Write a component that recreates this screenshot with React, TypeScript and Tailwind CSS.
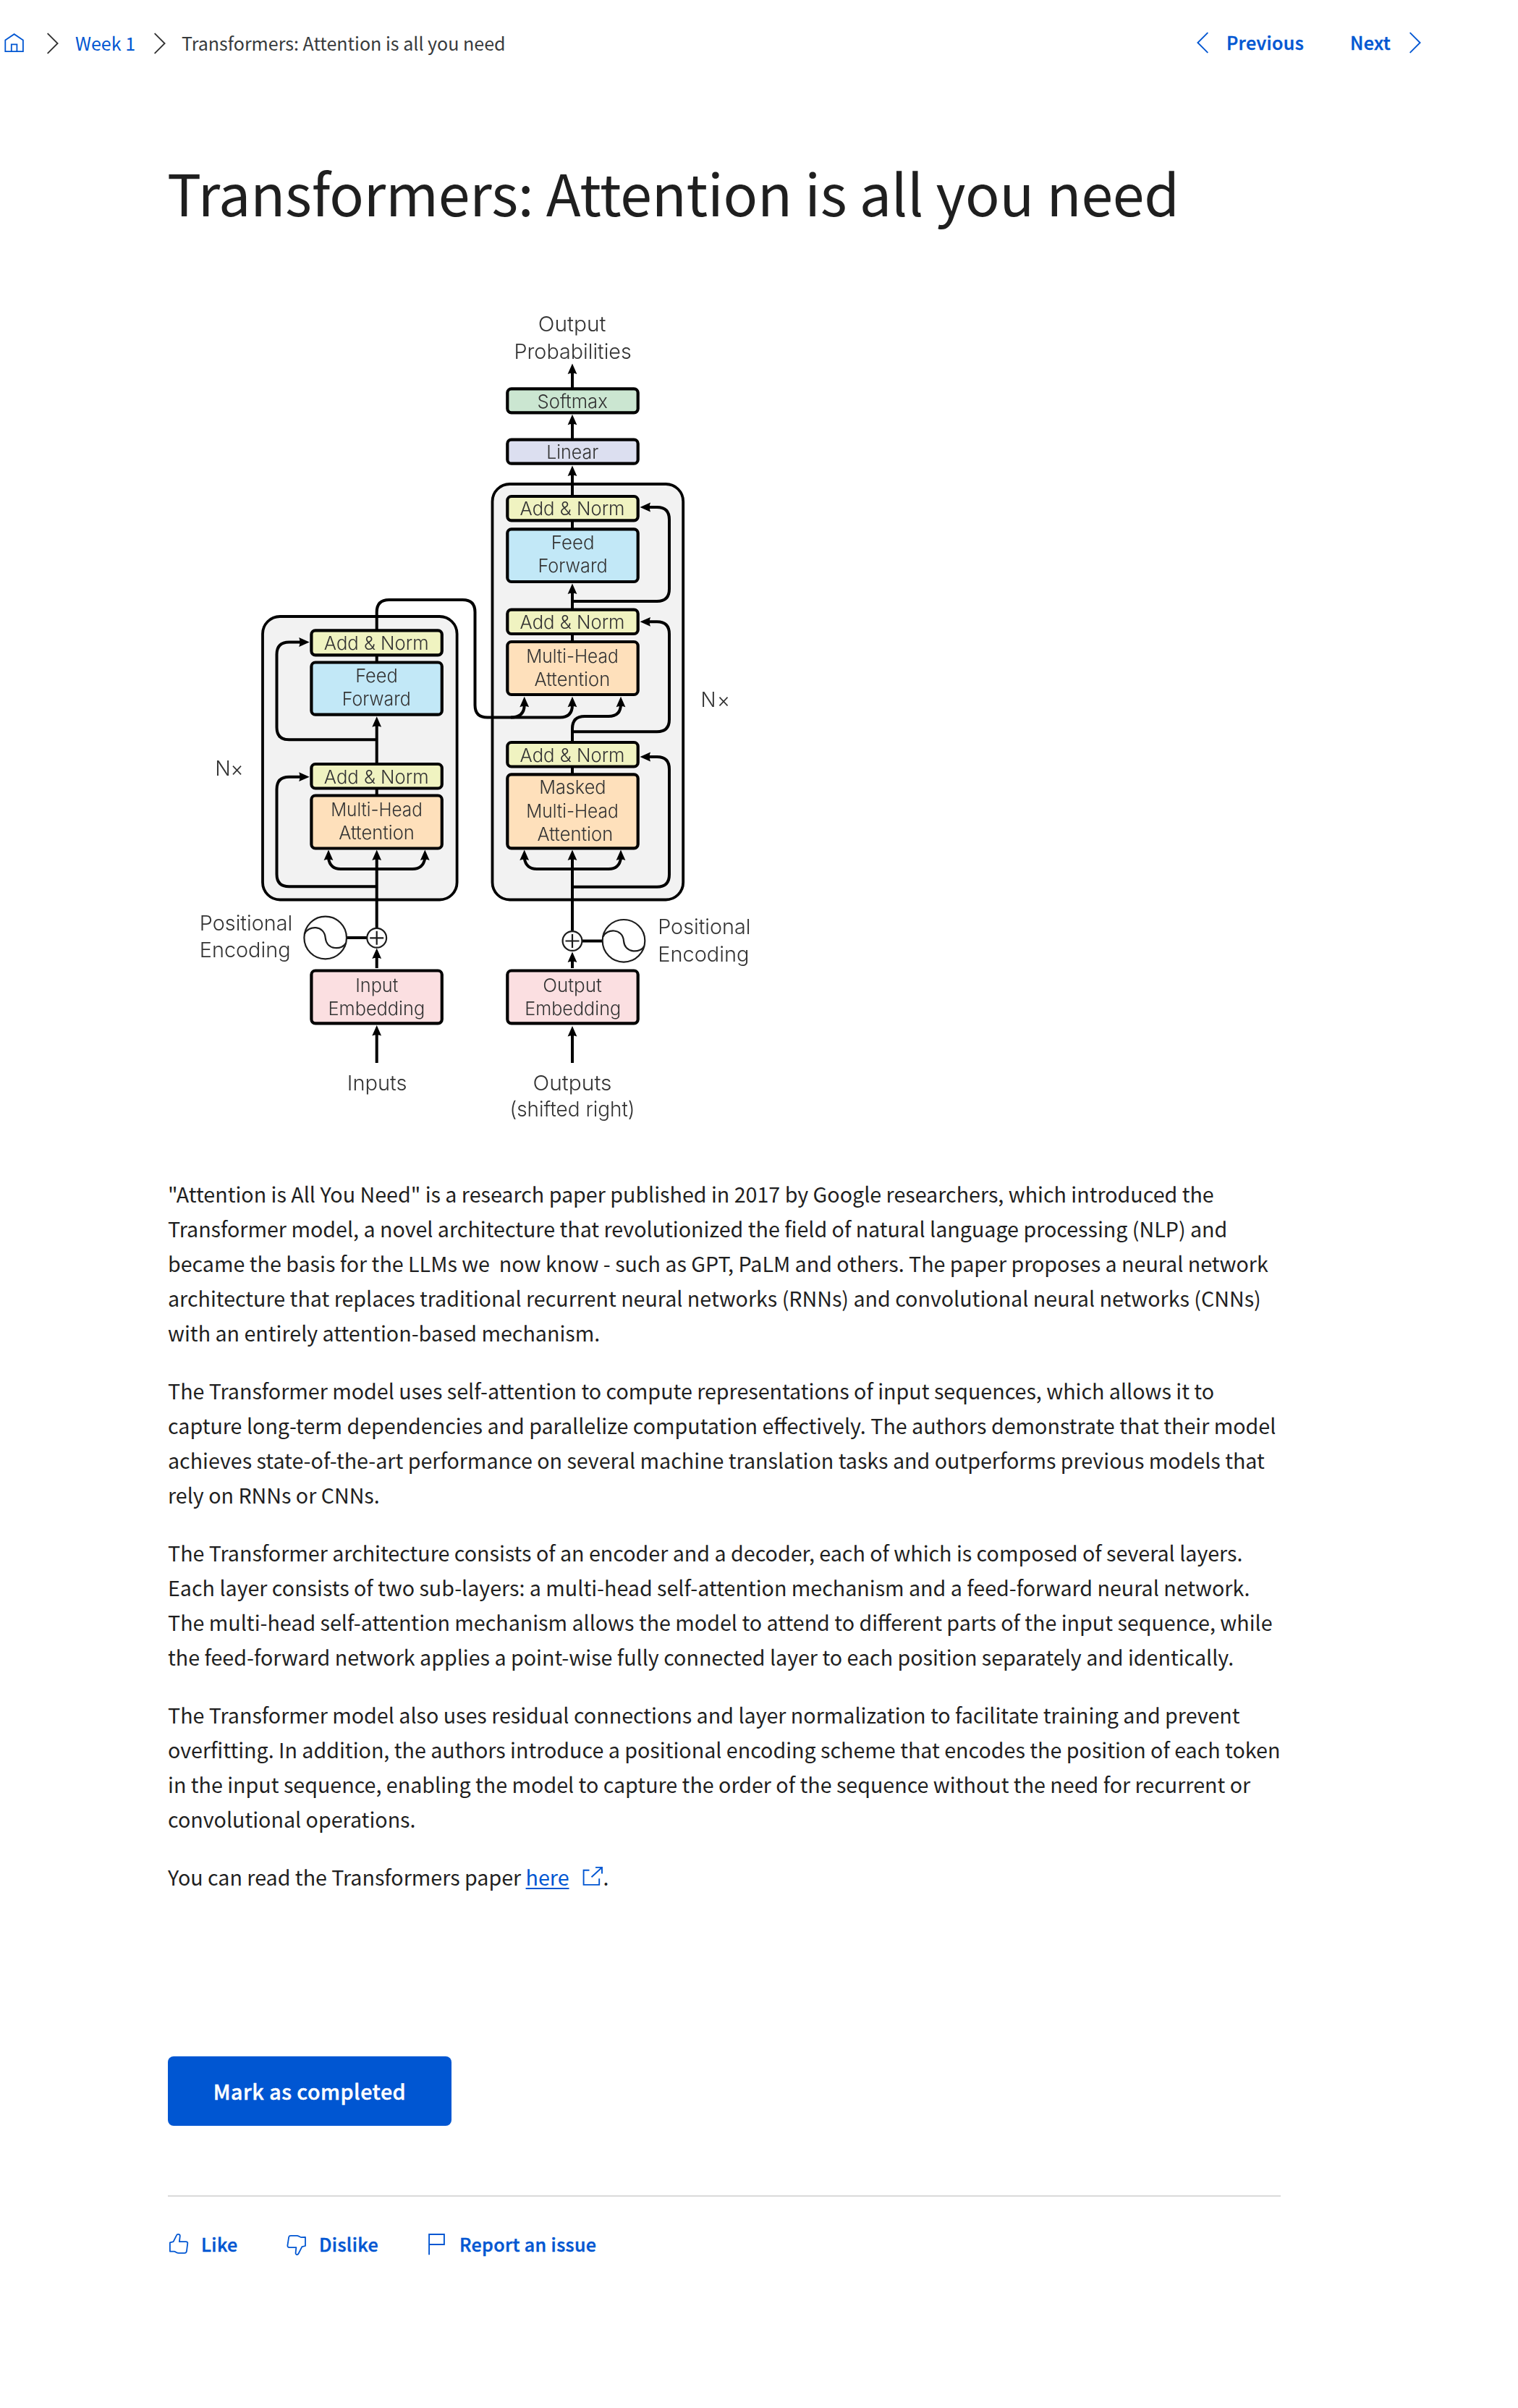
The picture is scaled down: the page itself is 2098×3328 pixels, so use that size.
import React from 'react';

const BLUE = '#0056D2';

/* ---------- icons ---------- */

function HomeIcon() {
  return (
    <svg width="32" height="32" viewBox="0 0 32 32" fill="none" stroke={BLUE} strokeWidth="1.8">
      <path d="M3.3 27.2V11.4L15.6 3.2L27.9 11.4V27.2Z" />
      <path d="M11.8 27.2V17.3H19.4V27.2" />
    </svg>
  );
}

function Chevron({ color, left = false }: { color: string; left?: boolean }) {
  return (
    <svg width="18" height="30" viewBox="0 0 18 30" fill="none" stroke={color} strokeWidth="1.9" strokeLinecap="round">
      <path d={left ? 'M15.8 1.6L2.4 15L15.8 28.4' : 'M2.2 1.6L15.6 15L2.2 28.4'} />
    </svg>
  );
}

function ExternalIcon() {
  return (
    <svg className="inline-block align-baseline ml-[17px]" width="30" height="28" viewBox="0 0 30 28" fill="none" stroke={BLUE} strokeWidth="1.9">
      <path d="M10.5 6.7H2.6V26.9H24.2V18.2" />
      <path d="M13.5 16.3L27.6 3.2M19 2.9H28V11.5" />
    </svg>
  );
}

function LikeIcon() {
  return (
    <svg width="30" height="34" viewBox="0 0 30 34" fill="none" stroke={BLUE} strokeWidth="1.8" strokeLinejoin="round">
      <path d="M2.9 26.5V14.4L7.6 13.2L12 4.3C13 2 17 2.5 16.8 5.5L15.9 13.2H25Q27.6 13.2 27.3 15.5L26 26Q25.7 28.9 23 28.9H15C12 28.9 11 27 8.6 26.7Z" />
    </svg>
  );
}

function DislikeIcon() {
  return (
    <svg width="30" height="34" viewBox="0 0 30 34" fill="none" stroke={BLUE} strokeWidth="1.8" strokeLinejoin="round">
      <path d="M5.2 6.6Q5.6 4.9 8 4.9H16C19 4.9 20 6.9 22.4 7.1L28 7V19L23.4 20.2L18.6 29.5C17.4 32 14.4 31.4 14.6 28.4L15.4 21.1H6Q3.2 21 3.4 18.4Z" />
    </svg>
  );
}

function FlagIcon() {
  return (
    <svg width="26" height="34" viewBox="0 0 26 34" fill="none" stroke={BLUE} strokeWidth="1.9">
      <path d="M3.1 31.2V3H23.9V17H3.1" />
    </svg>
  );
}

/* ---------- architecture diagram ---------- */

// Label whose glyphs span x0..x1 on baseline y.
function Label({ x0, x1, y, size = 26, children }: { x0: number; x1: number; y: number; size?: number; children: string }) {
  return (
    <text x={x0 - 1.5} y={y} fontSize={size} textLength={x1 - x0 + 3} lengthAdjust="spacingAndGlyphs" fill="#333">
      {children}
    </text>
  );
}

function Box({ x, top, bottom, fill }: { x: number; top: number; bottom: number; fill: string }) {
  return <rect x={x + 2} y={top + 2} width={180.4} height={bottom - top - 4} rx={5.5} fill={fill} stroke="#000" strokeWidth={4.2} />;
}

function Head({ x, y, dir = 'up' }: { x: number; y: number; dir?: 'up' | 'left' | 'right' }) {
  const angle = dir === 'up' ? 0 : dir === 'left' ? -90 : 90;
  return <path d="M0 0L6.4 14.5Q0 12 -6.4 14.5Z" transform={`translate(${x} ${y}) rotate(${angle})`} fill="#000" stroke="none" />;
}

function Plus({ x, y }: { x: number; y: number }) {
  return (
    <g strokeWidth={2.2} stroke="#1c1c1c">
      <circle cx={x} cy={y} r={13.4} fill="#fff" />
      <path d={`M${x - 9.5} ${y}H${x + 9.5}M${x} ${y - 9.5}V${y + 9.5}`} />
    </g>
  );
}

function Wave({ x, y }: { x: number; y: number }) {
  return (
    <g transform={`translate(${x} ${y})`} strokeWidth={2.2} stroke="#1c1c1c" fill="none">
      <circle r={29.3} />
      <path d="M-28.6 -5.5C-24 -17 -1.5 -18 0 0C1.5 18 24 17 28.6 7" />
    </g>
  );
}

const PEACH = '#FEE0BB';
const LIME = '#F0F3C1';
const SKY = '#C2E8F7';
const PINK = '#FBDFE1';

function Diagram() {
  return (
    <svg
      className="block font-['Inter'] font-light blur-[0.6px]"
      width="830"
      height="1180"
      viewBox="232 400 830 1180"
      fill="none"
      stroke="#000"
      strokeWidth={4}
    >
      {/* stacks */}
      <rect x={363} y={852} width={268.6} height={391.5} rx={24} fill="#F2F2F2" strokeWidth={3.8} />
      <rect x={680.5} y={669} width={263.7} height={574.5} rx={24} fill="#F2F2F2" strokeWidth={3.8} />

      {/* encoder wiring */}
      <path d="M520.7 1469V1425M520.7 1338V1320M520.7 1283V1184M520.7 1098V1086M520.7 1056V1000M520.7 914V904" />
      <path d="M520.7 870V846Q520.7 829 537.7 829H639.5Q656.5 829 656.5 846V974.5Q656.5 991.5 673.5 991.5H774Q791 991.5 791 974" />
      <path d="M706 991.5Q724.7 991.5 724.7 974" />
      <path d="M520.7 1022.3H399.5Q382.5 1022.3 382.5 1005.3V904.5Q382.5 887.5 399.5 887.5H415" />
      <path d="M520.7 1225.2H399.5Q382.5 1225.2 382.5 1208.2V1090.7Q382.5 1073.7 399.5 1073.7H415" />
      <path d="M454 1186Q456 1201 471 1201H570Q585 1201 587.3 1186" />

      {/* decoder wiring */}
      <path d="M791 1469V1427M791 1338V1326M791 1286V1184M791 1070V1060M791 887V876M791 842V816M791 732V720M791 686V654M791 607V582M791 536V513" />
      <path d="M791 1026V1007Q791 990 808 990H841Q858 990 858 973" />
      <path d="M791 831H908Q925 831 925 814V718Q925 701 908 701H896" />
      <path d="M791 1011.2H908Q925 1011.2 925 994.2V876.3Q925 859.3 908 859.3H896" />
      <path d="M791 1225.7H908Q925 1225.7 925 1208.7V1063Q925 1046 908 1046H896" />
      <path d="M724.7 1186Q727 1201 742 1201H841Q856 1201 858 1186" />

      {/* arrow heads */}
      <Head x={520.7} y={1417} />
      <Head x={520.7} y={1310.5} />
      <Head x={454} y={1174.6} />
      <Head x={520.7} y={1174.6} />
      <Head x={587.3} y={1174.6} />
      <Head x={520.7} y={990.3} />
      <Head x={427.7} y={887.5} dir="right" />
      <Head x={427.7} y={1073.7} dir="right" />
      <Head x={791} y={1418} />
      <Head x={791} y={1315.5} />
      <Head x={724.7} y={1174.6} />
      <Head x={791} y={1174.6} />
      <Head x={858} y={1174.6} />
      <Head x={724.7} y={962.7} />
      <Head x={791} y={962.7} />
      <Head x={858} y={962.7} />
      <Head x={791} y={806.5} />
      <Head x={791} y={643.5} />
      <Head x={791} y={572.7} />
      <Head x={791} y={502.5} />
      <Head x={884.5} y={701} dir="left" />
      <Head x={884.5} y={859.3} dir="left" />
      <Head x={884.5} y={1046} dir="left" />

      {/* positional encodings */}
      <path d="M479 1296H508M804 1300.5H833" />
      <Plus x={520.7} y={1296.3} />
      <Plus x={791} y={1300.5} />
      <Wave x={449.7} y={1296} />
      <Wave x={862} y={1300.3} />

      {/* encoder blocks */}
      <Box x={428.4} top={869.3} bottom={907.3} fill={LIME} />
      <Box x={428.4} top={913.5} bottom={989.7} fill={SKY} />
      <Box x={428.4} top={1054} bottom={1091.5} fill={LIME} />
      <Box x={428.4} top={1097.5} bottom={1174.5} fill={PEACH} />
      <Box x={428.4} top={1339.5} bottom={1416.3} fill={PINK} />

      {/* decoder blocks */}
      <Box x={699.3} top={535.3} bottom={572.3} fill="#CBE6D1" />
      <Box x={699.3} top={605.7} bottom={642.7} fill="#DCDFF0" />
      <Box x={699.3} top={684} bottom={721.3} fill={LIME} />
      <Box x={699.3} top={729.3} bottom={806} fill={SKY} />
      <Box x={699.3} top={840.7} bottom={878} fill={LIME} />
      <Box x={699.3} top={885} bottom={962} fill={PEACH} />
      <Box x={699.3} top={1024} bottom={1061.5} fill={LIME} />
      <Box x={699.3} top={1068.3} bottom={1174.3} fill={PEACH} />
      <Box x={699.3} top={1339.5} bottom={1416.3} fill={PINK} />

      {/* labels */}
      <g stroke="none">
        <Label x0={745.3} x1={836} y={458.3} size={29}>Output</Label>
        <Label x0={712} x1={871.3} y={495.7} size={29}>Probabilities</Label>
        <Label x0={744} x1={838.3} y={564}>Softmax</Label>
        <Label x0={756.7} x1={825.7} y={633.7}>Linear</Label>
        <Label x0={720} x1={862} y={712}>{'Add & Norm'}</Label>
        <Label x0={763.3} x1={820} y={759}>Feed</Label>
        <Label x0={745} x1={838.3} y={790.5}>Forward</Label>
        <Label x0={720} x1={862} y={869.3}>{'Add & Norm'}</Label>
        <Label x0={728.7} x1={853.3} y={916.3}>Multi-Head</Label>
        <Label x0={740} x1={841.7} y={948}>Attention</Label>
        <Label x0={720} x1={862} y={1052.7}>{'Add & Norm'}</Label>
        <Label x0={746.7} x1={836} y={1097.3}>Masked</Label>
        <Label x0={728.7} x1={853.3} y={1130}>Multi-Head</Label>
        <Label x0={744} x1={845.7} y={1161.7}>Attention</Label>
        <Label x0={970} x1={988} y={976.7} size={29}>N</Label>
        <Label x0={992.5} x1={1007.5} y={977.7} size={29}>×</Label>
        <Label x0={449.3} x1={591} y={898}>{'Add & Norm'}</Label>
        <Label x0={492.7} x1={548.3} y={943.3}>Feed</Label>
        <Label x0={474.3} x1={566.3} y={974.5}>Forward</Label>
        <Label x0={449.3} x1={591} y={1082.7}>{'Add & Norm'}</Label>
        <Label x0={458.7} x1={582.3} y={1127.7}>Multi-Head</Label>
        <Label x0={469.7} x1={571.3} y={1159.7}>Attention</Label>
        <Label x0={298.7} x1={317.3} y={1072} size={29}>N</Label>
        <Label x0={320} x1={335} y={1073} size={29}>×</Label>
        <Label x0={277.3} x1={402.7} y={1285.7} size={29}>Positional</Label>
        <Label x0={277.3} x1={400} y={1323.3} size={29}>Encoding</Label>
        <Label x0={492.7} x1={548.7} y={1370.5}>Input</Label>
        <Label x0={455} x1={585.7} y={1402.7}>Embedding</Label>
        <Label x0={481.3} x1={561} y={1506.7} size={29}>Inputs</Label>
        <Label x0={751.7} x1={830.3} y={1370.5}>Output</Label>
        <Label x0={726.7} x1={856.7} y={1402.7}>Embedding</Label>
        <Label x0={738} x1={844} y={1506.7} size={29}>Outputs</Label>
        <Label x0={706} x1={876} y={1543} size={29}>(shifted right)</Label>
        <Label x0={910.7} x1={1036} y={1291.3} size={29}>Positional</Label>
        <Label x0={910.7} x1={1034} y={1329} size={29}>Encoding</Label>
      </g>
    </svg>
  );
}

/* ---------- page ---------- */

const paragraphs = [
  '"Attention is All You Need" is a research paper published in 2017 by Google researchers, which introduced the Transformer model, a novel architecture that revolutionized the field of natural language processing (NLP) and became the basis for the LLMs we \u00a0now know - such as GPT, PaLM and others. The paper proposes a neural network architecture that replaces traditional recurrent neural networks (RNNs) and convolutional neural networks (CNNs) with an entirely attention-based mechanism.',
  'The Transformer model uses self-attention to compute representations of input sequences, which allows it to capture long-term dependencies and parallelize computation effectively. The authors demonstrate that their model achieves state-of-the-art performance on several machine translation tasks and outperforms previous models that rely on RNNs or CNNs.',
  'The Transformer architecture consists of an encoder and a decoder, each of which is composed of several layers. Each layer consists of two sub-layers: a multi-head self-attention mechanism and a feed-forward neural network. The multi-head self-attention mechanism allows the model to attend to different parts of the input sequence, while the feed-forward network applies a point-wise fully connected layer to each position separately and identically.',
  'The Transformer model also uses residual connections and layer normalization to facilitate training and prevent overfitting. In addition, the authors introduce a positional encoding scheme that encodes the position of each token in the input sequence, enabling the model to capture the order of the sequence without the need for recurrent or convolutional operations.',
];

export default function App() {
  return (
    <div className="h-[3328px] w-[2098px] overflow-hidden bg-white font-['Noto_Sans_CJK_SC',sans-serif] text-[#1f1f1f]">
      <header className="flex h-[120px] items-start text-[25.06px] leading-10 whitespace-nowrap">
        <nav className="flex items-start pt-[39px] pl-1">
          <a className="mt-[5px]"><HomeIcon /></a>
          <span className="mt-1.5 ml-[28px]"><Chevron color="#333333" /></span>
          <a className="ml-[22px] w-[83px] text-[#0056D2]">Week 1</a>
          <span className="mt-1.5 ml-[25px]"><Chevron color="#333333" /></span>
          <span className="ml-[21px] text-[#373a3c]">Transformers: Attention is all you need</span>
        </nav>
        <div className="ml-auto flex items-start pt-[38px] pr-[133px] font-medium tracking-[0.36px] text-[#0056D2] [-webkit-text-stroke:0.45px_#0056D2]">
          <span className="mt-1.5"><Chevron color={BLUE} left /></span>
          <a className="ml-6 w-[108px]">Previous</a>
          <a className="ml-[63px] w-[57px]">Next</a>
          <span className="mt-1.5 ml-6"><Chevron color={BLUE} /></span>
        </div>
      </header>

      <main className="ml-[232px] w-[1538px] pt-[93px]">
        <h1 className="-ml-px h-[104px] text-[78.8px] leading-[104px] tracking-[-0.24px] whitespace-nowrap">
          Transformers: Attention is all you need
        </h1>

        <figure className="mt-[83px]"><Diagram /></figure>

        <article className="mt-[46px] flex flex-col gap-8 text-[28.65px] leading-[48px]">
          {paragraphs.map((p) => (
            <p key={p.slice(0, 40)}>{p}</p>
          ))}
          <p className="h-12">
            You can read the Transformers paper{' '}
            <a className="text-[#0056D2]">
              <span className="underline decoration-2 underline-offset-[3px]">here</span>
              <ExternalIcon />
            </a>
            .
          </p>
        </article>

        <button className="mt-56 flex h-24 w-[392px] items-center justify-center rounded-lg bg-[#0056D2] text-[28.65px] font-medium tracking-[0.5px] text-white [-webkit-text-stroke:0.45px_#fff]">
          Mark as completed
        </button>

        <footer className="mt-24 flex items-start border-t-2 border-[#dadada] pt-[45px] text-[25.06px] leading-10 font-medium tracking-[0.36px] whitespace-nowrap text-[#0056D2] [-webkit-text-stroke:0.45px_#0056D2]">
          <a className="flex w-[162px] items-start"><span className="mt-1"><LikeIcon /></span><span className="ml-[16px]">Like</span></a>
          <a className="flex w-[196px] items-start"><span className="mt-1"><DislikeIcon /></span><span className="ml-[17px]">Dislike</span></a>
          <a className="flex items-start"><span className="mt-1"><FlagIcon /></span><span className="ml-[19px]">Report an issue</span></a>
        </footer>
      </main>
    </div>
  );
}
